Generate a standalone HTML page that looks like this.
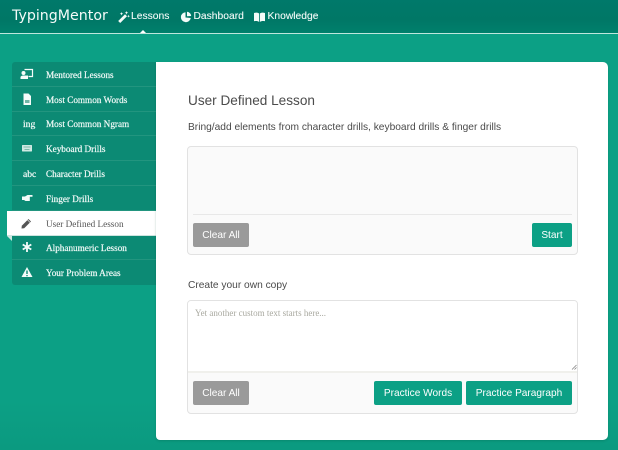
<!DOCTYPE html>
<html><head><meta charset="utf-8"><style>
*{box-sizing:border-box}
html,body{margin:0;padding:0}
body{width:618px;height:450px;overflow:hidden;position:relative;background:linear-gradient(#0ca085,#0ca085 400px,#0b9a80);font-family:"Liberation Sans",sans-serif}
.abs{position:absolute}
.nav{left:0;top:0;width:618px;height:34px;background:linear-gradient(#00796a,#007766 60%,#00806c);border-bottom:1px solid #bfe6dd}
.logo{left:12px;top:7px;font-family:"DejaVu Sans",sans-serif;font-size:14.2px;line-height:18px;color:#f4fbf9;white-space:nowrap}
.nl{top:10px;font-size:10.3px;line-height:14px;color:#f2faf8;white-space:nowrap;-webkit-text-stroke:.1px #f2faf8}
.side{left:12px;top:62px;width:144px;height:223px;background:#0c8a74;border-radius:3px 0 0 3px}
.row{position:absolute;left:0;width:144px;height:25px;border-bottom:1px solid #22957f;font-family:"Liberation Serif",serif;font-size:9.2px;color:#f2faf8;line-height:27px;padding-left:34px;white-space:nowrap;-webkit-text-stroke:.2px #f2faf8}
.ic{position:absolute;left:7px;top:0;width:16px;height:25px;text-align:center;font-size:9.6px}
.ic svg{position:absolute;left:0;top:6px}
.active{left:7px;top:211px;width:149px;height:25px;background:#fff;font-family:"Liberation Serif",serif;font-size:9.2px;color:#555;line-height:27px;padding-left:39px;white-space:nowrap;border-bottom:1px solid #cde4df}
.fold{left:7px;top:236px;width:0;height:0;border-top:5px solid #cfe8e2;border-left:5px solid transparent}
.card{left:156px;top:62px;width:452px;height:378px;background:#fff;border-radius:0 5px 5px 4px;box-shadow:0 1px 2px rgba(0,80,60,.25)}
.h{left:188px;top:93px;font-size:13.6px;line-height:16px;color:#4b4b4b;white-space:nowrap}
.p{left:188px;font-size:10.2px;line-height:13px;color:#4a4a4a;white-space:nowrap}
.well{left:187px;width:391px;background:#fafafa;border:1px solid #e2e2e2;border-radius:4px}
.btn{height:24px;line-height:26px;font-size:10.1px;color:#fff;text-align:center;border-radius:2px;white-space:nowrap}
.g{background:#9a9a9a}.t{background:#0ca085}
</style></head><body>
<div class="abs nav"></div>
<div class="abs logo">TypingMentor</div>
<svg class="abs" style="left:118px;top:11px" width="12" height="12" viewBox="0 0 12 12"><path d="M0.2 10L7 3.2L9 5.2L2.2 12Z" fill="#f4fbf9"/><path d="M8.5 0l.5 1.3 1.3.5-1.3.5-.5 1.3-.5-1.3-1.3-.5 1.3-.5ZM10.5 3.8l.4 1 1 .4-1 .4-.4 1-.4-1-1-.4 1-.4ZM3.5 1l.5 1.2 1.2.5-1.2.5-.5 1.2-.5-1.2-1.2-.5 1.2-.5Z" fill="#f4fbf9"/></svg>
<div class="abs nl" style="left:131px">Lessons</div>
<svg class="abs" style="left:180px;top:11px" width="12" height="12" viewBox="0 0 12 12"><path d="M5.5 1.2A5 5 0 1 0 10.8 7L5.5 6.5Z" fill="#f4fbf9"/><path d="M7 .8A4.6 4.6 0 0 1 11.2 5L7 5.2Z" fill="#f4fbf9"/></svg>
<div class="abs nl" style="left:193.5px">Dashboard</div>
<svg class="abs" style="left:254px;top:12px" width="11" height="10" viewBox="0 0 11 10"><path d="M0 1C2 .4 4 .6 5.1 1.5V10C4 9 2 8.8 0 9.2ZM11 1C9 .4 7 .6 5.9 1.5V10C7 9 9 8.8 11 9.2Z" fill="#f4fbf9"/></svg>
<div class="abs nl" style="left:267.5px">Knowledge</div>
<div class="abs" style="left:140px;top:30px;width:0;height:0;border-left:3px solid transparent;border-right:3px solid transparent;border-bottom:3px solid #fff"></div>

<div class="abs side">
<div class="row" style="top:0"><span class="ic"><svg width="16" height="12" viewBox="0 0 16 12"><path d="M5.5 1.5h8v7h-4" fill="none" stroke="#f4fbf9" stroke-width="1.2"/><circle cx="4.5" cy="5" r="2" fill="#f4fbf9"/><path d="M1.5 11V9.5C1.5 8 3 7.5 4.5 7.5H9V11Z" fill="#f4fbf9"/></svg></span>Mentored Lessons</div>
<div class="row" style="top:25px"><span class="ic"><svg width="16" height="12" viewBox="0 0 16 12"><path d="M4.5 0.5H9.5L12 3V12H4.5Z" fill="#f4fbf9"/><path d="M6 7h4.5v3H6Z" fill="#6fb5a6"/></svg></span>Most Common Words</div>
<div class="row" style="top:49px"><span class="ic" style="left:11px;text-align:left">ing</span>Most Common Ngram</div>
<div class="row" style="top:74px"><span class="ic"><svg width="16" height="12" viewBox="0 0 16 12"><rect x="3" y="3" width="10" height="6.5" rx=".6" fill="#cfe9e3"/><path d="M4.5 5h7M5.5 7.5h5" stroke="#7db9aa" stroke-width="1"/></svg></span>Keyboard Drills</div>
<div class="row" style="top:99px"><span class="ic" style="left:11px;text-align:left">abc</span>Character Drills</div>
<div class="row" style="top:124px"><span class="ic"><svg width="16" height="12" viewBox="0 0 16 12"><path d="M3 4.5H6L8.5 3H13.5V4.8H10.8V9H6.5L5 8H3Z" fill="#f4fbf9"/></svg></span>Finger Drills</div>
<div class="row" style="top:173px"><span class="ic"><svg width="16" height="12" viewBox="0 0 16 12"><path d="M8 1V11M3.7 3.5L12.3 8.5M3.7 8.5L12.3 3.5" stroke="#f4fbf9" stroke-width="1.8"/></svg></span>Alphanumeric Lesson</div>
<div class="row" style="top:198px;border-bottom:none"><span class="ic"><svg width="16" height="12" viewBox="0 0 16 12"><path d="M8 1L13.5 11H2.5Z" fill="#f4fbf9"/><path d="M8 4.5V8M8 9V10.2" stroke="#0c8a74" stroke-width="1.4"/></svg></span>Your Problem Areas</div>
</div>
<div class="abs active">User Defined Lesson</div>
<div class="abs fold"></div>
<svg class="abs" style="left:21px;top:218px" width="11" height="11" viewBox="0 0 11 11"><path d="M7.5 1L10 3.5L3.2 10.2L.5 10.5L.8 7.8Z" fill="#555"/><path d="M6.6 2L9 4.4" stroke="#fff" stroke-width=".6"/></svg>

<div class="abs card"></div>
<div class="abs h">User Defined Lesson</div>
<div class="abs p" style="top:121px">Bring/add elements from character drills, keyboard drills &amp; finger drills</div>
<div class="abs well" style="top:146px;height:109px"></div>
<div class="abs" style="left:193px;top:214px;width:379px;height:1px;background:#e8e8e8"></div>
<div class="abs btn g" style="left:193px;top:223px;width:56px">Clear All</div>
<div class="abs btn t" style="left:532px;top:223px;width:40px">Start</div>

<div class="abs p" style="top:279px">Create your own copy</div>
<div class="abs well" style="top:300px;height:114px"></div>
<div class="abs" style="left:188px;top:301px;width:389px;height:72px;background:#fff;border-radius:3px 3px 0 0;border-bottom:2px solid #f0f0ec"></div>
<div class="abs" style="left:195px;top:307px;font-family:'Liberation Serif',serif;font-size:9px;line-height:12px;color:#a9a9a0;white-space:nowrap">Yet another custom text starts here...</div>
<svg class="abs" style="left:571px;top:364px" width="6" height="6" viewBox="0 0 6 6"><path d="M1 5.5L5.5 1M3.5 5.5L5.5 3.5" stroke="#777" stroke-width=".7"/></svg>
<div class="abs btn g" style="left:193px;top:381px;width:56px">Clear All</div>
<div class="abs btn t" style="left:374px;top:381px;width:88px">Practice Words</div>
<div class="abs btn t" style="left:466px;top:381px;width:106px">Practice Paragraph</div>
</body></html>
